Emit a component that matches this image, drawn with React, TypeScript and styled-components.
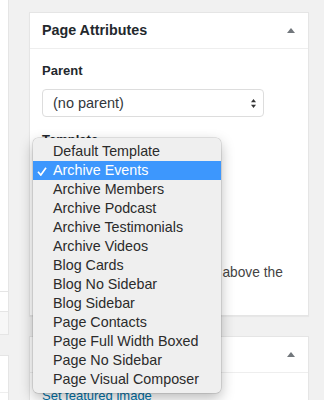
import React from 'react';
import styled, { createGlobalStyle } from 'styled-components';

const GlobalStyle = createGlobalStyle`
  html, body {
    margin: 0;
    padding: 0;
    background: #f1f1f1;
  }
  body {
    font-family: "Liberation Sans", Arial, sans-serif;
    color: #444;
    overflow: hidden;
  }
  * { box-sizing: border-box; }
`;

const Screen = styled.div`
  display: flex;
  gap: 20px;
  width: 324px;
  height: 400px;
  overflow: hidden;
  background: #f1f1f1;
`;

/* sliver of the editor column on the left */
const MainColumn = styled.div`
  width: 9px;
  flex-shrink: 0;
  display: flex;
  flex-direction: column;
`;

const EditorPane = styled.div`
  height: 292px;
  background: #fff;
  border-right: 1px solid #e5e5e5;
  border-bottom: 1px solid #e5e5e5;
`;

const EditorPath = styled.div`
  height: 20px;
  background: #fff;
  border-right: 1px solid #e5e5e5;
  border-bottom: 1px solid #e5e5e5;
`;

const WordCount = styled.div`
  height: 23px;
  background: #f7f7f7;
  border-right: 1px solid #e5e5e5;
  border-bottom: 1px solid #e5e5e5;
`;

const MainBox = styled.div`
  margin-top: 20px;
  flex: 1;
  background: #fff;
  border-top: 1px solid #e5e5e5;
  border-right: 1px solid #e5e5e5;
`;

const MainBoxHeader = styled.div`
  height: 37px;
  border-bottom: 1px solid #eee;
`;

const Sidebar = styled.div`
  width: 280px;
  flex-shrink: 0;
  padding-top: 12px;
  display: flex;
  flex-direction: column;
  gap: 20px;
`;

const Postbox = styled.div`
  position: relative;
  background: #fff;
  border: 1px solid #e5e5e5;
  box-shadow: 0 1px 1px rgba(0, 0, 0, 0.04);
`;

const PostboxHeader = styled.div`
  height: 36px;
  display: flex;
  align-items: center;
  justify-content: space-between;
  padding: 0 13px 0 12px;
  border-bottom: 1px solid #eee;
`;

const PostboxTitle = styled.h2`
  margin: 0;
  font-size: 14.3px;
  font-weight: 700;
  line-height: 35px;
  color: #23282d;
`;

const Inside = styled.div<{ $bottom: number }>`
  padding: 0 12px ${(p) => p.$bottom}px;
  display: flex;
  flex-direction: column;
  align-items: flex-start;
`;

const FieldLabel = styled.p<{ $top: number }>`
  margin: ${(p) => p.$top}px 0 0;
  font-size: 13px;
  font-weight: 700;
  line-height: 18px;
  color: #23282d;
`;

const SelectBox = styled.div`
  margin-top: 9px;
  width: 222px;
  height: 28px;
  display: flex;
  align-items: center;
  justify-content: space-between;
  padding: 0 7px 0 10px;
  background: #fff;
  border: 1px solid #ddd;
  border-radius: 4px;
  font-size: 14.5px;
  color: #32373c;
`;

const HelpText = styled.p<{ $top: number }>`
  margin: ${(p) => p.$top}px 0 0;
  font-size: 13.75px;
  line-height: 18px;
  color: #444;
`;

const FeaturedLink = styled.a`
  margin-top: 13px;
  font-size: 13px;
  line-height: 19px;
  color: #0073aa;
  text-decoration: underline;
`;

/* native popup menu of the template select, open over the box */
const PopupMenu = styled.div`
  position: absolute;
  left: 3px;
  top: 125px;
  width: 188px;
  height: 255px;
  padding: 4px 0;
  background: #efefef;
  border-radius: 5px;
  box-shadow: 0 0 0 0.5px rgba(0, 0, 0, 0.18), 0 5px 14px rgba(0, 0, 0, 0.28);
  z-index: 2;
`;

const MenuItem = styled.div<{ $active?: boolean }>`
  position: relative;
  height: 19px;
  line-height: 19px;
  padding-left: 20px;
  font-size: 14.3px;
  white-space: nowrap;
  color: ${(p) => (p.$active ? '#fff' : '#2b2b2b')};
  background: ${(p) => (p.$active ? '#3d97fd' : 'transparent')};
`;

const Check = styled.svg`
  position: absolute;
  left: 4px;
  top: 6px;
`;

const templates = [
  'Default Template',
  'Archive Events',
  'Archive Members',
  'Archive Podcast',
  'Archive Testimonials',
  'Archive Videos',
  'Blog Cards',
  'Blog No Sidebar',
  'Blog Sidebar',
  'Page Contacts',
  'Page Full Width Boxed',
  'Page No Sidebar',
  'Page Visual Composer',
];

function Toggle() {
  return (
    <svg width="8" height="5" viewBox="0 0 8 5">
      <path d="M4 0 L8 5 L0 5 Z" fill="#72777c" />
    </svg>
  );
}

function SelectArrows() {
  return (
    <svg width="5" height="9" viewBox="0 0 5 9">
      <path d="M2.5 0 L5 3.3 L0 3.3 Z" fill="#333" />
      <path d="M0 5.7 L5 5.7 L2.5 9 Z" fill="#333" />
    </svg>
  );
}

export default function App() {
  const selected = 'Archive Events';

  return (
    <>
      <GlobalStyle />
      <Screen>
        <MainColumn>
          <EditorPane />
          <EditorPath />
          <WordCount />
          <MainBox>
            <MainBoxHeader />
          </MainBox>
        </MainColumn>

        <Sidebar>
          <Postbox>
            <PostboxHeader>
              <PostboxTitle>Page Attributes</PostboxTitle>
              <Toggle />
            </PostboxHeader>
            <Inside $bottom={15}>
              <FieldLabel $top={13}>Parent</FieldLabel>
              <SelectBox>
                <span>(no parent)</span>
                <SelectArrows />
              </SelectBox>
              <FieldLabel $top={14}>Template</FieldLabel>
              <HelpText $top={115}>Need help? Use the Help tab above the screen title.</HelpText>
            </Inside>

            <PopupMenu>
              {templates.map((name) => (
                <MenuItem key={name} $active={name === selected}>
                  {name === selected && (
                    <Check width="10" height="9" viewBox="0 0 10 9">
                      <path d="M1 4.8 L3.8 8 L9 0.8" fill="none" stroke="#fff" strokeWidth="1.7" />
                    </Check>
                  )}
                  {name}
                </MenuItem>
              ))}
            </PopupMenu>
          </Postbox>

          <Postbox>
            <PostboxHeader>
              <span />
              <Toggle />
            </PostboxHeader>
            <Inside $bottom={12}>
              <FeaturedLink href="#">Set featured image</FeaturedLink>
            </Inside>
          </Postbox>
        </Sidebar>
      </Screen>
    </>
  );
}
